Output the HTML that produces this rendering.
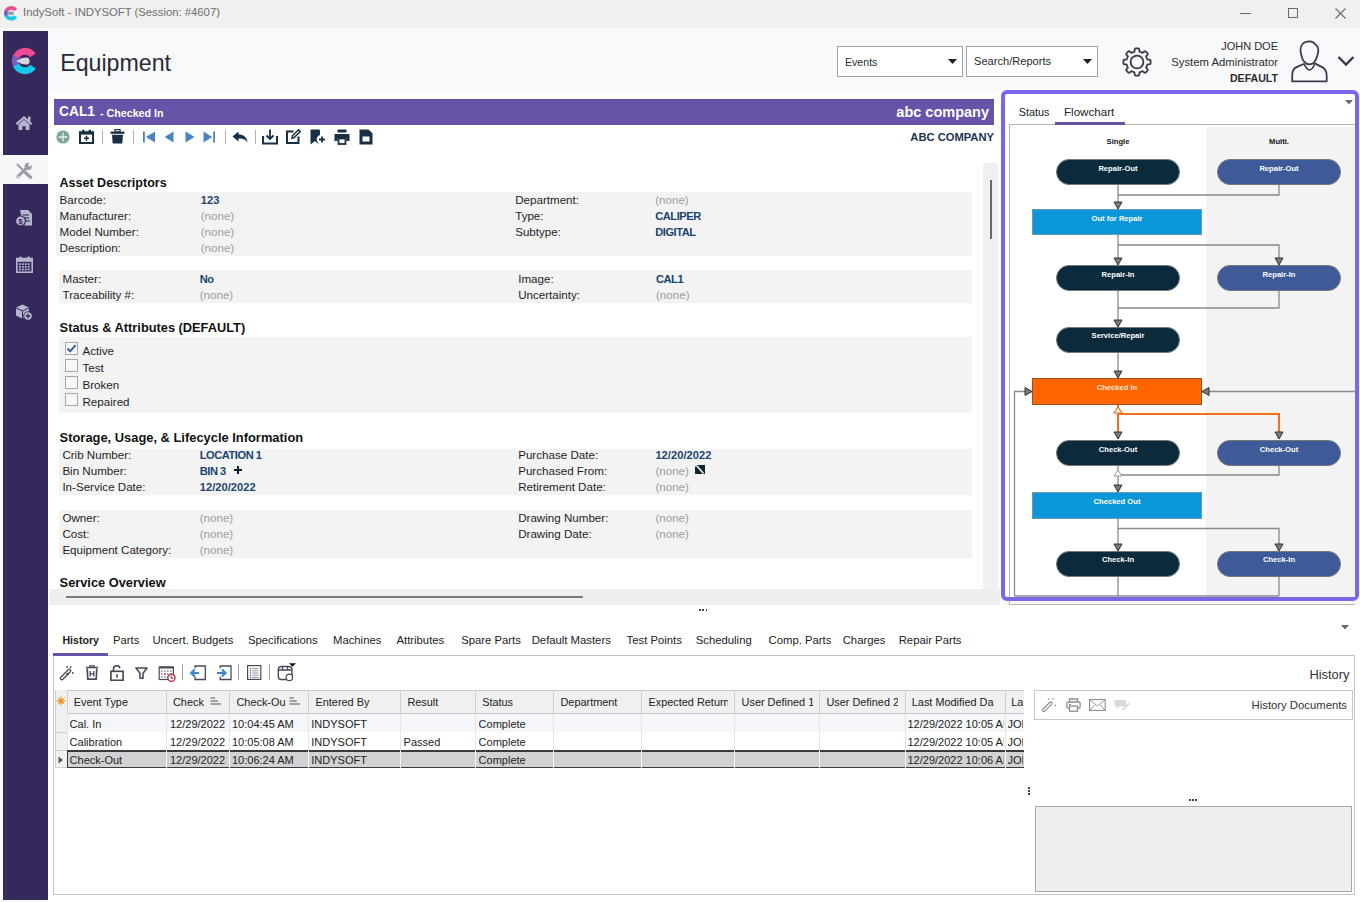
<!DOCTYPE html>
<html><head><meta charset="utf-8">
<style>
*{box-sizing:border-box;margin:0;padding:0}
html,body{width:1360px;height:902px;overflow:hidden;background:#f8f9fb;font-family:"Liberation Sans",sans-serif;color:#1e1e1e;position:relative}
.a{position:absolute;display:block}
.t{position:absolute;white-space:nowrap;line-height:1}
</style></head><body>
<div class="a" style="left:0px;top:0px;width:1360px;height:28px;background:#f0f0f0;"></div>
<svg class="a" style="left:2.5px;top:4.8px;" width="16.5" height="16.5" viewBox="0 0 32 32"><path d="M3.88 23.00 A14 14 0 0 1 3.88 9.00 L10.11 12.60 A6.8 6.8 0 0 0 10.11 19.40Z" fill="#7a5cc0"/><path d="M3.31 10.08 A14 14 0 0 1 27.47 7.97 L21.57 12.10 A6.8 6.8 0 0 0 9.84 13.13Z" fill="#ec4a92"/><path d="M27.47 24.03 A14 14 0 0 1 3.31 21.92 L9.84 18.87 A6.8 6.8 0 0 0 21.57 19.90Z" fill="#16c8ea"/><path d="M6.5 16 Q13 11.5 19.5 12.5 Q22.5 16 19.5 19.5 Q13 20.5 6.5 16Z" fill="#9a9aa6"/></svg>
<div class="t" style="left:23px;top:6.73px;font-size:11.3px;color:#6e6e6e;">IndySoft - INDYSOFT (Session: #4607)</div>
<div class="a" style="left:1240px;top:13px;width:11px;height:1px;background:#6a6a6a;"></div>
<div class="a" style="left:1288px;top:8px;width:10px;height:10px;background:transparent;border:1px solid #6a6a6a;"></div>
<svg class="a" style="left:1335px;top:8px;" width="12" height="11" viewBox="0 0 12 11"><path d="M0.5 0.5 L10.5 10.5 M10.5 0.5 L0.5 10.5" stroke="#6a6a6a" stroke-width="1.1"/></svg>
<div class="a" style="left:0px;top:28px;width:1360px;height:65px;background:#f8f9fb;"></div>
<div class="t" style="left:60.2px;top:51.76px;font-size:23.2px;color:#2a2a36;">Equipment</div>
<div class="a" style="left:837px;top:46px;width:126px;height:31px;background:#fff;border:1px solid #a3a3a3;"></div>
<div class="t" style="left:845px;top:56.53px;font-size:10.6px;color:#2a2a2a;">Events</div>
<svg class="a" style="left:948px;top:59px;" width="9" height="5" viewBox="0 0 9 5"><path d="M0 0 H9 L4.5 5Z" fill="#222"/></svg>
<div class="a" style="left:966px;top:46px;width:132px;height:31px;background:#fff;border:1px solid #a3a3a3;"></div>
<div class="t" style="left:974px;top:56.10px;font-size:11.1px;color:#2a2a2a;">Search/Reports</div>
<svg class="a" style="left:1083px;top:59px;" width="9" height="5" viewBox="0 0 9 5"><path d="M0 0 H9 L4.5 5Z" fill="#222"/></svg>
<svg class="a" style="left:1121px;top:45.7px;" width="32" height="32" viewBox="0 0 32 32"><path d="M29.60 16.00 L29.60 16.18 L29.60 16.36 L29.59 16.53 L29.58 16.71 L29.57 16.89 L29.56 17.07 L29.54 17.24 L29.53 17.42 L29.51 17.60 L29.48 17.78 L29.38 17.94 L29.12 18.08 L28.74 18.19 L28.26 18.27 L27.75 18.34 L27.25 18.39 L26.81 18.45 L26.48 18.52 L26.29 18.61 L26.24 18.74 L26.20 18.88 L26.16 19.01 L26.12 19.14 L26.08 19.28 L26.04 19.41 L25.99 19.54 L25.94 19.67 L25.90 19.80 L25.85 19.93 L25.79 20.06 L25.74 20.18 L25.68 20.31 L25.63 20.44 L25.57 20.56 L25.51 20.69 L25.44 20.81 L25.38 20.94 L25.32 21.06 L25.25 21.18 L25.18 21.30 L25.13 21.43 L25.19 21.63 L25.38 21.92 L25.65 22.26 L25.96 22.66 L26.28 23.06 L26.55 23.46 L26.75 23.81 L26.83 24.09 L26.79 24.28 L26.68 24.42 L26.57 24.56 L26.46 24.70 L26.34 24.83 L26.23 24.97 L26.11 25.10 L25.99 25.23 L25.87 25.36 L25.74 25.49 L25.62 25.62 L25.49 25.74 L25.36 25.87 L25.23 25.99 L25.10 26.11 L24.97 26.23 L24.83 26.34 L24.70 26.46 L24.56 26.57 L24.42 26.68 L24.28 26.79 L24.09 26.83 L23.81 26.75 L23.46 26.55 L23.06 26.28 L22.66 25.96 L22.26 25.65 L21.92 25.38 L21.63 25.19 L21.43 25.13 L21.30 25.18 L21.18 25.25 L21.06 25.32 L20.94 25.38 L20.81 25.44 L20.69 25.51 L20.56 25.57 L20.44 25.63 L20.31 25.68 L20.18 25.74 L20.06 25.79 L19.93 25.85 L19.80 25.90 L19.67 25.94 L19.54 25.99 L19.41 26.04 L19.28 26.08 L19.14 26.12 L19.01 26.16 L18.88 26.20 L18.74 26.24 L18.61 26.29 L18.52 26.48 L18.45 26.81 L18.39 27.25 L18.34 27.75 L18.27 28.26 L18.19 28.74 L18.08 29.12 L17.94 29.38 L17.78 29.48 L17.60 29.51 L17.42 29.53 L17.24 29.54 L17.07 29.56 L16.89 29.57 L16.71 29.58 L16.53 29.59 L16.36 29.60 L16.18 29.60 L16.00 29.60 L15.82 29.60 L15.64 29.60 L15.47 29.59 L15.29 29.58 L15.11 29.57 L14.93 29.56 L14.76 29.54 L14.58 29.53 L14.40 29.51 L14.22 29.48 L14.06 29.38 L13.92 29.12 L13.81 28.74 L13.73 28.26 L13.66 27.75 L13.61 27.25 L13.55 26.81 L13.48 26.48 L13.39 26.29 L13.26 26.24 L13.12 26.20 L12.99 26.16 L12.86 26.12 L12.72 26.08 L12.59 26.04 L12.46 25.99 L12.33 25.94 L12.20 25.90 L12.07 25.85 L11.94 25.79 L11.82 25.74 L11.69 25.68 L11.56 25.63 L11.44 25.57 L11.31 25.51 L11.19 25.44 L11.06 25.38 L10.94 25.32 L10.82 25.25 L10.70 25.18 L10.57 25.13 L10.37 25.19 L10.08 25.38 L9.74 25.65 L9.34 25.96 L8.94 26.28 L8.54 26.55 L8.19 26.75 L7.91 26.83 L7.72 26.79 L7.58 26.68 L7.44 26.57 L7.30 26.46 L7.17 26.34 L7.03 26.23 L6.90 26.11 L6.77 25.99 L6.64 25.87 L6.51 25.74 L6.38 25.62 L6.26 25.49 L6.13 25.36 L6.01 25.23 L5.89 25.10 L5.77 24.97 L5.66 24.83 L5.54 24.70 L5.43 24.56 L5.32 24.42 L5.21 24.28 L5.17 24.09 L5.25 23.81 L5.45 23.46 L5.72 23.06 L6.04 22.66 L6.35 22.26 L6.62 21.92 L6.81 21.63 L6.87 21.43 L6.82 21.30 L6.75 21.18 L6.68 21.06 L6.62 20.94 L6.56 20.81 L6.49 20.69 L6.43 20.56 L6.37 20.44 L6.32 20.31 L6.26 20.18 L6.21 20.06 L6.15 19.93 L6.10 19.80 L6.06 19.67 L6.01 19.54 L5.96 19.41 L5.92 19.28 L5.88 19.14 L5.84 19.01 L5.80 18.88 L5.76 18.74 L5.71 18.61 L5.52 18.52 L5.19 18.45 L4.75 18.39 L4.25 18.34 L3.74 18.27 L3.26 18.19 L2.88 18.08 L2.62 17.94 L2.52 17.78 L2.49 17.60 L2.47 17.42 L2.46 17.24 L2.44 17.07 L2.43 16.89 L2.42 16.71 L2.41 16.53 L2.40 16.36 L2.40 16.18 L2.40 16.00 L2.40 15.82 L2.40 15.64 L2.41 15.47 L2.42 15.29 L2.43 15.11 L2.44 14.93 L2.46 14.76 L2.47 14.58 L2.49 14.40 L2.52 14.22 L2.62 14.06 L2.88 13.92 L3.26 13.81 L3.74 13.73 L4.25 13.66 L4.75 13.61 L5.19 13.55 L5.52 13.48 L5.71 13.39 L5.76 13.26 L5.80 13.12 L5.84 12.99 L5.88 12.86 L5.92 12.72 L5.96 12.59 L6.01 12.46 L6.06 12.33 L6.10 12.20 L6.15 12.07 L6.21 11.94 L6.26 11.82 L6.32 11.69 L6.37 11.56 L6.43 11.44 L6.49 11.31 L6.56 11.19 L6.62 11.06 L6.68 10.94 L6.75 10.82 L6.82 10.70 L6.87 10.57 L6.81 10.37 L6.62 10.08 L6.35 9.74 L6.04 9.34 L5.72 8.94 L5.45 8.54 L5.25 8.19 L5.17 7.91 L5.21 7.72 L5.32 7.58 L5.43 7.44 L5.54 7.30 L5.66 7.17 L5.77 7.03 L5.89 6.90 L6.01 6.77 L6.13 6.64 L6.26 6.51 L6.38 6.38 L6.51 6.26 L6.64 6.13 L6.77 6.01 L6.90 5.89 L7.03 5.77 L7.17 5.66 L7.30 5.54 L7.44 5.43 L7.58 5.32 L7.72 5.21 L7.91 5.17 L8.19 5.25 L8.54 5.45 L8.94 5.72 L9.34 6.04 L9.74 6.35 L10.08 6.62 L10.37 6.81 L10.57 6.87 L10.70 6.82 L10.82 6.75 L10.94 6.68 L11.06 6.62 L11.19 6.56 L11.31 6.49 L11.44 6.43 L11.56 6.37 L11.69 6.32 L11.82 6.26 L11.94 6.21 L12.07 6.15 L12.20 6.10 L12.33 6.06 L12.46 6.01 L12.59 5.96 L12.72 5.92 L12.86 5.88 L12.99 5.84 L13.12 5.80 L13.26 5.76 L13.39 5.71 L13.48 5.52 L13.55 5.19 L13.61 4.75 L13.66 4.25 L13.73 3.74 L13.81 3.26 L13.92 2.88 L14.06 2.62 L14.22 2.52 L14.40 2.49 L14.58 2.47 L14.76 2.46 L14.93 2.44 L15.11 2.43 L15.29 2.42 L15.47 2.41 L15.64 2.40 L15.82 2.40 L16.00 2.40 L16.18 2.40 L16.36 2.40 L16.53 2.41 L16.71 2.42 L16.89 2.43 L17.07 2.44 L17.24 2.46 L17.42 2.47 L17.60 2.49 L17.78 2.52 L17.94 2.62 L18.08 2.88 L18.19 3.26 L18.27 3.74 L18.34 4.25 L18.39 4.75 L18.45 5.19 L18.52 5.52 L18.61 5.71 L18.74 5.76 L18.88 5.80 L19.01 5.84 L19.14 5.88 L19.28 5.92 L19.41 5.96 L19.54 6.01 L19.67 6.06 L19.80 6.10 L19.93 6.15 L20.06 6.21 L20.18 6.26 L20.31 6.32 L20.44 6.37 L20.56 6.43 L20.69 6.49 L20.81 6.56 L20.94 6.62 L21.06 6.68 L21.18 6.75 L21.30 6.82 L21.43 6.87 L21.63 6.81 L21.92 6.62 L22.26 6.35 L22.66 6.04 L23.06 5.72 L23.46 5.45 L23.81 5.25 L24.09 5.17 L24.28 5.21 L24.42 5.32 L24.56 5.43 L24.70 5.54 L24.83 5.66 L24.97 5.77 L25.10 5.89 L25.23 6.01 L25.36 6.13 L25.49 6.26 L25.62 6.38 L25.74 6.51 L25.87 6.64 L25.99 6.77 L26.11 6.90 L26.23 7.03 L26.34 7.17 L26.46 7.30 L26.57 7.44 L26.68 7.58 L26.79 7.72 L26.83 7.91 L26.75 8.19 L26.55 8.54 L26.28 8.94 L25.96 9.34 L25.65 9.74 L25.38 10.08 L25.19 10.37 L25.13 10.57 L25.18 10.70 L25.25 10.82 L25.32 10.94 L25.38 11.06 L25.44 11.19 L25.51 11.31 L25.57 11.44 L25.63 11.56 L25.68 11.69 L25.74 11.82 L25.79 11.94 L25.85 12.07 L25.90 12.20 L25.94 12.33 L25.99 12.46 L26.04 12.59 L26.08 12.72 L26.12 12.86 L26.16 12.99 L26.20 13.12 L26.24 13.26 L26.29 13.39 L26.48 13.48 L26.81 13.55 L27.25 13.61 L27.75 13.66 L28.26 13.73 L28.74 13.81 L29.12 13.92 L29.38 14.06 L29.48 14.22 L29.51 14.40 L29.53 14.58 L29.54 14.76 L29.56 14.93 L29.57 15.11 L29.58 15.29 L29.59 15.47 L29.60 15.64 L29.60 15.82Z" fill="none" stroke="#3a3a46" stroke-width="1.8" stroke-linejoin="round"/><circle cx="16" cy="16" r="6.4" fill="none" stroke="#3a3a46" stroke-width="1.8"/></svg>
<div class="t" style="right:82px;top:41.19px;font-size:11px;color:#2c2c2c;">JOHN DOE</div>
<div class="t" style="right:82px;top:56.73px;font-size:11.3px;color:#2c2c2c;">System Administrator</div>
<div class="t" style="right:82px;top:73.03px;font-size:10.6px;color:#2c2c2c;font-weight:700;">DEFAULT</div>
<svg class="a" style="left:1285px;top:36px;" width="50" height="50" viewBox="0 0 50 50"><path d="M24.5 5.3 C18.5 5.3 15.5 9 15.5 14 C15.5 17 16.3 18.5 16.5 20 C17.5 24.5 20.5 28.3 24.4 28.3 C28.5 28.3 31 24.5 32 20.5 C33 18.5 33.5 16.5 33.3 13.5 C33 11 32 9.5 30.5 8.5 C29 6.2 27 5.3 24.5 5.3Z" fill="none" stroke="#3b3a4a" stroke-width="1.8"/>
<path d="M19 27.7 C20.5 31 22.5 34 24.4 34 C26.5 34 28.5 31 30 27.2" fill="none" stroke="#3b3a4a" stroke-width="1.6"/>
<path d="M19 27.7 C16 29.5 12 30.5 10 32 C7.5 34 7.2 36.5 7.2 40 V45.3 H41.7 V40 C41.7 36.5 41 34 38.5 32 C36.5 30.5 33 29.5 30 27.2" fill="none" stroke="#3b3a4a" stroke-width="1.8" stroke-linejoin="round"/></svg>
<svg class="a" style="left:1337px;top:55px;" width="18" height="12" viewBox="0 0 18 12"><path d="M1.5 2 L9 9.5 L16.5 2" fill="none" stroke="#3b3b48" stroke-width="2.4"/></svg>
<div class="a" style="left:3px;top:31px;width:45px;height:869px;background:#35295b;"></div>
<div class="a" style="left:3px;top:155px;width:45px;height:29px;background:#f7f8fa;"></div>
<svg class="a" style="left:10px;top:45.5px;" width="30" height="30" viewBox="0 0 32 32"><path d="M3.88 23.00 A14 14 0 0 1 3.88 9.00 L10.11 12.60 A6.8 6.8 0 0 0 10.11 19.40Z" fill="#7a5cc0"/><path d="M3.31 10.08 A14 14 0 0 1 27.47 7.97 L21.57 12.10 A6.8 6.8 0 0 0 9.84 13.13Z" fill="#ec4a92"/><path d="M27.47 24.03 A14 14 0 0 1 3.31 21.92 L9.84 18.87 A6.8 6.8 0 0 0 21.57 19.90Z" fill="#16c8ea"/><path d="M6.5 16 Q13 11.5 19.5 12.5 Q22.5 16 19.5 19.5 Q13 20.5 6.5 16Z" fill="#d8d4dc"/></svg>
<svg class="a" style="left:15px;top:115px;" width="18" height="16" viewBox="0 0 18 16"><path d="M9 1 L17.5 8.5 L15.8 10 L9 4 L2.2 10 L0.5 8.5Z" fill="#b9b3cf"/><path d="M3.5 9.5 L9 4.8 L14.5 9.5 V15 H10.6 V11.2 H7.4 V15 H3.5Z" fill="#b9b3cf"/><rect x="13" y="1.5" width="2.5" height="4.5" fill="#b9b3cf"/></svg>
<svg class="a" style="left:15px;top:162px;" width="18" height="18" viewBox="0 0 18 18"><path d="M2.6 2.8 L9 9.2" stroke="#9c9ca8" stroke-width="2.2" stroke-linecap="round"/><path d="M10.2 10.4 L15.6 15.2" stroke="#9c9ca8" stroke-width="3.4" stroke-linecap="round"/><path d="M2.8 14.6 L11.2 6.2" stroke="#9c9ca8" stroke-width="3" stroke-linecap="round"/><circle cx="13.2" cy="4.4" r="3.6" fill="#9c9ca8"/><path d="M13.8 3.8 L17.8 -0.2" stroke="#f7f8fa" stroke-width="2.6"/><circle cx="2.9" cy="14.5" r="0.8" fill="#f7f8fa"/></svg>
<svg class="a" style="left:15px;top:209px;" width="18" height="18" viewBox="0 0 18 18"><path d="M5 1 H13 L17 5 V16.5 H8" fill="#b9b3cf"/><path d="M7.5 6 H14 M9 9 H14 M10 12 H15" stroke="#35295b" stroke-width="1.1"/><circle cx="5.5" cy="12" r="5" fill="#b9b3cf" stroke="#35295b" stroke-width="1.2"/><text x="5.5" y="15" font-size="8" font-weight="700" text-anchor="middle" fill="#35295b" font-family="Liberation Sans">$</text></svg>
<svg class="a" style="left:16px;top:256px;" width="17" height="17" viewBox="0 0 17 17"><rect x="0.8" y="2.5" width="15.4" height="13.7" fill="none" stroke="#b9b3cf" stroke-width="1.6"/><rect x="0.8" y="2.5" width="15.4" height="3.3" fill="#b9b3cf"/><rect x="3.5" y="0.5" width="2" height="3" fill="#b9b3cf"/><rect x="11.5" y="0.5" width="2" height="3" fill="#b9b3cf"/><rect x="3.0" y="7.2" width="1.9" height="1.8" fill="#b9b3cf"/><rect x="5.9" y="7.2" width="1.9" height="1.8" fill="#b9b3cf"/><rect x="8.8" y="7.2" width="1.9" height="1.8" fill="#b9b3cf"/><rect x="11.7" y="7.2" width="1.9" height="1.8" fill="#b9b3cf"/><rect x="3.0" y="9.9" width="1.9" height="1.8" fill="#b9b3cf"/><rect x="5.9" y="9.9" width="1.9" height="1.8" fill="#b9b3cf"/><rect x="8.8" y="9.9" width="1.9" height="1.8" fill="#b9b3cf"/><rect x="11.7" y="9.9" width="1.9" height="1.8" fill="#b9b3cf"/><rect x="3.0" y="12.6" width="1.9" height="1.8" fill="#b9b3cf"/><rect x="5.9" y="12.6" width="1.9" height="1.8" fill="#b9b3cf"/><rect x="8.8" y="12.6" width="1.9" height="1.8" fill="#b9b3cf"/><rect x="11.7" y="12.6" width="1.9" height="1.8" fill="#b9b3cf"/></svg>
<svg class="a" style="left:15px;top:303px;" width="18" height="18" viewBox="0 0 18 18"><path d="M1 4.5 L7.5 1.5 L14 4.5 L7.5 7.5Z" fill="#b9b3cf"/><path d="M1 5.5 L7 8.3 V15.5 L1 12.5Z" fill="#b9b3cf"/><path d="M8 8.3 L14 5.5 V9 A5 5 0 0 0 9 15 L8 15.5Z" fill="#b9b3cf"/><circle cx="13" cy="13" r="4.3" fill="#b9b3cf" stroke="#35295b" stroke-width="0.9"/><path d="M13 10.8 V15.2 M10.8 13 H15.2" stroke="#35295b" stroke-width="1.3"/></svg>
<div class="a" style="left:48px;top:93px;width:953px;height:512px;background:#fff;"></div>
<div class="a" style="left:54px;top:99px;width:940px;height:26px;background:#6753a7;"></div>
<div class="a" style="left:54px;top:99px;width:940px;height:1px;background:#5f4c93;"></div>
<div class="t" style="left:59px;top:105.32px;font-size:13.8px;color:#fff;font-weight:700;">CAL1</div>
<div class="t" style="left:100px;top:107.94px;font-size:10.7px;color:#fff;font-weight:700;">- Checked In</div>
<div class="t" style="right:371px;top:104.73px;font-size:14.5px;color:#fff;font-weight:700;">abc company</div>
<div class="t" style="right:366px;top:131.52px;font-size:11.2px;color:#1a3550;font-weight:700;">ABC COMPANY</div>
<svg class="a" style="left:56px;top:130px;" width="14" height="14" viewBox="0 0 14 14"><circle cx="7" cy="7" r="6.6" fill="#7fa598"/><path d="M7 2.6 V11.4 M2.6 7 H11.4" stroke="#e8f0ec" stroke-width="1.3"/></svg>
<svg class="a" style="left:79px;top:129px;" width="15" height="15" viewBox="0 0 15 15"><rect x="1" y="3.2" width="13" height="10.8" fill="none" stroke="#173043" stroke-width="2"/><rect x="1" y="3" width="13" height="2.6" fill="#173043"/><rect x="3" y="0.8" width="2.4" height="3" fill="#173043"/><rect x="9.6" y="0.8" width="2.4" height="3" fill="#173043"/><path d="M7.5 6.8 V11.8 M5 9.3 H10" stroke="#173043" stroke-width="1.6"/></svg>
<div class="a" style="left:102px;top:130px;width:1.2999999999999972px;height:14px;background:#b0b0b0;"></div>
<svg class="a" style="left:110px;top:129px;" width="15" height="15" viewBox="0 0 15 15"><rect x="0.5" y="2.6" width="14" height="2.2" fill="#173043"/><rect x="5" y="0.5" width="5" height="2.5" fill="none" stroke="#173043" stroke-width="1.3"/><path d="M2 5.8 H13 L12.3 14.5 H2.7Z" fill="#173043"/></svg>
<div class="a" style="left:133px;top:130px;width:1.3000000000000114px;height:14px;background:#b0b0b0;"></div>
<svg class="a" style="left:143px;top:131px;" width="13" height="12" viewBox="0 0 13 12"><rect x="0" y="0.5" width="1.8" height="11" fill="#4a84c4"/><path d="M12 0.5 V11.5 L2.8 6Z" fill="#4a84c4"/></svg>
<svg class="a" style="left:164px;top:131px;" width="10" height="12" viewBox="0 0 10 12"><path d="M9.5 0.5 V11.5 L0.5 6Z" fill="#4a84c4"/></svg>
<svg class="a" style="left:185px;top:131px;" width="10" height="12" viewBox="0 0 10 12"><path d="M0.5 0.5 V11.5 L9.5 6Z" fill="#4a84c4"/></svg>
<svg class="a" style="left:203px;top:131px;" width="13" height="12" viewBox="0 0 13 12"><path d="M0.5 0.5 V11.5 L9.2 6Z" fill="#4a84c4"/><rect x="10.2" y="0.5" width="1.8" height="11" fill="#4a84c4"/></svg>
<div class="a" style="left:225px;top:130px;width:1.3000000000000114px;height:14px;background:#b0b0b0;"></div>
<svg class="a" style="left:232px;top:131px;" width="16" height="12" viewBox="0 0 16 12"><path d="M6.5 0.5 L0.5 5.5 L6.5 10.5 V7.5 C10.5 7 13.5 8.5 15.5 11.5 C15 6.5 11.5 3.5 6.5 3.3Z" fill="#173043"/></svg>
<div class="a" style="left:255px;top:130px;width:1.3000000000000114px;height:14px;background:#b0b0b0;"></div>
<svg class="a" style="left:262px;top:129px;" width="16" height="16" viewBox="0 0 16 16"><path d="M1 7 V14.5 H15 V7" fill="none" stroke="#173043" stroke-width="2"/><path d="M8 0.5 V9.5 M4.5 6.5 L8 10 L11.5 6.5" fill="none" stroke="#173043" stroke-width="1.8"/></svg>
<svg class="a" style="left:286px;top:129px;" width="15" height="15" viewBox="0 0 15 15"><path d="M7.5 2.5 H1 V14 H12.5 V7.5" fill="none" stroke="#173043" stroke-width="2"/><path d="M6 9.2 L6.5 6.8 L12.5 0.8 L14.2 2.5 L8.2 8.5Z" fill="none" stroke="#173043" stroke-width="1.5"/></svg>
<svg class="a" style="left:310px;top:129px;" width="16" height="16" viewBox="0 0 16 16"><path d="M0.5 0.5 H9 C9.5 0.5 10 1 10 1.5 V6 A4.5 4.5 0 0 0 8 13.5 L9 15.5 L5 12 L0.5 15.5Z" fill="#173043"/><path d="M12 7.5 V13.5 M9 10.5 H15" stroke="#173043" stroke-width="1.8"/></svg>
<svg class="a" style="left:334px;top:129px;" width="16" height="16" viewBox="0 0 16 16"><rect x="3.5" y="0.5" width="9" height="3" fill="#173043"/><path d="M0.5 5 H15.5 V12 H12.5 V9.5 H3.5 V12 H0.5Z" fill="#173043"/><rect x="4.5" y="9.5" width="7" height="5.5" fill="none" stroke="#173043" stroke-width="1.8"/></svg>
<svg class="a" style="left:359px;top:129px;" width="14" height="16" viewBox="0 0 14 16"><path d="M0.5 0.5 H9.5 L13.5 4.5 V15.5 H0.5Z" fill="#173043"/><rect x="3.5" y="7.5" width="7" height="5" fill="#fff"/></svg>
<div class="a" style="left:983px;top:163px;width:15px;height:426px;background:#f0f0f0;"></div>
<div class="a" style="left:990px;top:180px;width:2px;height:59px;background:#6a6a6a;"></div>
<div class="t" style="left:59.6px;top:177.22px;font-size:12.5px;color:#111;font-weight:700;">Asset Descriptors</div>
<div class="a" style="left:56px;top:192px;width:916px;height:64px;background:#f3f3f3;"></div>
<div class="t" style="left:59.6px;top:194.18px;font-size:11.6px;color:#1e1e1e;">Barcode:</div>
<div class="t" style="left:200.7px;top:194.60px;font-size:11.1px;color:#1b4470;font-weight:700;letter-spacing:0.05px;">123</div>
<div class="t" style="left:59.6px;top:210.18px;font-size:11.6px;color:#1e1e1e;">Manufacturer:</div>
<div class="t" style="left:200.7px;top:210.18px;font-size:11.6px;color:#9c9c9c;">(none)</div>
<div class="t" style="left:59.6px;top:226.18px;font-size:11.6px;color:#1e1e1e;">Model Number:</div>
<div class="t" style="left:200.7px;top:226.18px;font-size:11.6px;color:#9c9c9c;">(none)</div>
<div class="t" style="left:59.6px;top:242.18px;font-size:11.6px;color:#1e1e1e;">Description:</div>
<div class="t" style="left:200.7px;top:242.18px;font-size:11.6px;color:#9c9c9c;">(none)</div>
<div class="t" style="left:515.2px;top:194.18px;font-size:11.6px;color:#1e1e1e;">Department:</div>
<div class="t" style="left:655.2px;top:194.18px;font-size:11.6px;color:#9c9c9c;">(none)</div>
<div class="t" style="left:515.2px;top:210.18px;font-size:11.6px;color:#1e1e1e;">Type:</div>
<div class="t" style="left:655.2px;top:210.60px;font-size:11.1px;color:#1b4470;font-weight:700;letter-spacing:-0.45px;">CALIPER</div>
<div class="t" style="left:515.2px;top:226.18px;font-size:11.6px;color:#1e1e1e;">Subtype:</div>
<div class="t" style="left:655.2px;top:226.60px;font-size:11.1px;color:#1b4470;font-weight:700;letter-spacing:-0.45px;">DIGITAL</div>
<div class="a" style="left:59px;top:270px;width:913px;height:33px;background:#f3f3f3;"></div>
<div class="t" style="left:62.5px;top:273.18px;font-size:11.6px;color:#1e1e1e;">Master:</div>
<div class="t" style="left:199.7px;top:273.60px;font-size:11.1px;color:#1b4470;font-weight:700;letter-spacing:-0.45px;">No</div>
<div class="t" style="left:62.5px;top:289.18px;font-size:11.6px;color:#1e1e1e;">Traceability #:</div>
<div class="t" style="left:199.7px;top:289.18px;font-size:11.6px;color:#9c9c9c;">(none)</div>
<div class="t" style="left:518.2px;top:273.18px;font-size:11.6px;color:#1e1e1e;">Image:</div>
<div class="t" style="left:656px;top:273.60px;font-size:11.1px;color:#1b4470;font-weight:700;letter-spacing:-0.45px;">CAL1</div>
<div class="t" style="left:518.2px;top:289.18px;font-size:11.6px;color:#1e1e1e;">Uncertainty:</div>
<div class="t" style="left:656px;top:289.18px;font-size:11.6px;color:#9c9c9c;">(none)</div>
<div class="t" style="left:59.6px;top:321.76px;font-size:12.8px;color:#111;font-weight:700;">Status &amp; Attributes (DEFAULT)</div>
<div class="a" style="left:59px;top:337px;width:913px;height:76px;background:#f3f3f3;"></div>
<div class="a" style="left:65px;top:342px;width:13px;height:13px;background:#f7f7f7;border:1px solid #a8a8a8;"></div>
<div class="t" style="left:82.5px;top:344.68px;font-size:11.6px;color:#1e1e1e;">Active</div>
<div class="a" style="left:65px;top:359px;width:13px;height:13px;background:#f7f7f7;border:1px solid #a8a8a8;"></div>
<div class="t" style="left:82.5px;top:361.68px;font-size:11.6px;color:#1e1e1e;">Test</div>
<div class="a" style="left:65px;top:376px;width:13px;height:13px;background:#f7f7f7;border:1px solid #a8a8a8;"></div>
<div class="t" style="left:82.5px;top:378.68px;font-size:11.6px;color:#1e1e1e;">Broken</div>
<div class="a" style="left:65px;top:393px;width:13px;height:13px;background:#f7f7f7;border:1px solid #a8a8a8;"></div>
<div class="t" style="left:82.5px;top:395.68px;font-size:11.6px;color:#1e1e1e;">Repaired</div>
<svg class="a" style="left:66px;top:343px;" width="11" height="11" viewBox="0 0 11 11"><path d="M1.5 5.5 L4.2 8.3 L9.6 2.2" fill="none" stroke="#3e5f9c" stroke-width="2"/></svg>
<div class="t" style="left:59.6px;top:431.68px;font-size:12.9px;color:#111;font-weight:700;">Storage, Usage, &amp; Lifecycle Information</div>
<div class="a" style="left:59px;top:449px;width:913px;height:46px;background:#f3f3f3;"></div>
<div class="t" style="left:62.4px;top:449.18px;font-size:11.6px;color:#1e1e1e;">Crib Number:</div>
<div class="t" style="left:199.7px;top:449.60px;font-size:11.1px;color:#1b4470;font-weight:700;letter-spacing:-0.45px;">LOCATION 1</div>
<div class="t" style="left:62.4px;top:465.18px;font-size:11.6px;color:#1e1e1e;">Bin Number:</div>
<div class="t" style="left:199.7px;top:465.60px;font-size:11.1px;color:#1b4470;font-weight:700;letter-spacing:-0.45px;">BIN 3</div>
<div class="t" style="left:62.4px;top:481.18px;font-size:11.6px;color:#1e1e1e;">In-Service Date:</div>
<div class="t" style="left:199.7px;top:481.60px;font-size:11.1px;color:#1b4470;font-weight:700;letter-spacing:0.05px;">12/20/2022</div>
<svg class="a" style="left:234px;top:466px;" width="8" height="8" viewBox="0 0 8 8"><path d="M4 0 V8 M0 4 H8" stroke="#0e1e2a" stroke-width="2"/></svg>
<div class="t" style="left:518.2px;top:449.18px;font-size:11.6px;color:#1e1e1e;">Purchase Date:</div>
<div class="t" style="left:655.4px;top:449.60px;font-size:11.1px;color:#1b4470;font-weight:700;letter-spacing:0.05px;">12/20/2022</div>
<div class="t" style="left:518.2px;top:465.18px;font-size:11.6px;color:#1e1e1e;">Purchased From:</div>
<div class="t" style="left:655.4px;top:465.18px;font-size:11.6px;color:#9c9c9c;">(none)</div>
<div class="t" style="left:518.2px;top:481.18px;font-size:11.6px;color:#1e1e1e;">Retirement Date:</div>
<div class="t" style="left:655.4px;top:481.18px;font-size:11.6px;color:#9c9c9c;">(none)</div>
<svg class="a" style="left:695px;top:465px;" width="10" height="9" viewBox="0 0 10 9"><path d="M0 2 L2 0 H10 V9 H0Z" fill="#14262e"/><path d="M1.5 0.5 L8.5 8.5" stroke="#f3f3f3" stroke-width="1.6"/></svg>
<div class="a" style="left:59px;top:510px;width:913px;height:48px;background:#f3f3f3;"></div>
<div class="t" style="left:62.4px;top:512.18px;font-size:11.6px;color:#1e1e1e;">Owner:</div>
<div class="t" style="left:199.7px;top:512.18px;font-size:11.6px;color:#9c9c9c;">(none)</div>
<div class="t" style="left:62.4px;top:528.18px;font-size:11.6px;color:#1e1e1e;">Cost:</div>
<div class="t" style="left:199.7px;top:528.18px;font-size:11.6px;color:#9c9c9c;">(none)</div>
<div class="t" style="left:62.4px;top:544.18px;font-size:11.6px;color:#1e1e1e;">Equipment Category:</div>
<div class="t" style="left:199.7px;top:544.18px;font-size:11.6px;color:#9c9c9c;">(none)</div>
<div class="t" style="left:518.2px;top:512.18px;font-size:11.6px;color:#1e1e1e;">Drawing Number:</div>
<div class="t" style="left:655.4px;top:512.18px;font-size:11.6px;color:#9c9c9c;">(none)</div>
<div class="t" style="left:518.2px;top:528.18px;font-size:11.6px;color:#1e1e1e;">Drawing Date:</div>
<div class="t" style="left:655.4px;top:528.18px;font-size:11.6px;color:#9c9c9c;">(none)</div>
<div class="t" style="left:59.6px;top:576.76px;font-size:12.8px;color:#111;font-weight:700;">Service Overview</div>
<div class="a" style="left:49px;top:589px;width:951px;height:16px;background:#efefef;"></div>
<div class="a" style="left:66px;top:596px;width:517px;height:2px;background:#7a7a7a;"></div>
<div class="a" style="left:1001px;top:90px;width:358px;height:511px;background:#fff;border:4px solid #7b66ea;border-radius:6px;"></div>
<div class="t" style="left:1018.7px;top:106.86px;font-size:10.8px;color:#222;">Status</div>
<div class="t" style="left:1064px;top:106.18px;font-size:11.6px;color:#222;">Flowchart</div>
<div class="a" style="left:1009px;top:124px;width:346px;height:1px;background:#b4b4b4;"></div>
<div class="a" style="left:1055px;top:122px;width:70px;height:3px;background:#6852a3;"></div>
<svg class="a" style="left:1345px;top:100px;" width="8" height="5" viewBox="0 0 8 5"><path d="M0 0 H8 L4 4.5Z" fill="#6a6a6a"/></svg>
<div class="a" style="left:1009px;top:125px;width:1px;height:472px;background:#b4b4b4;"></div>
<div class="a" style="left:1009px;top:601px;width:1px;height:4px;background:#b8b8b8;"></div>
<div class="a" style="left:1206px;top:127px;width:149px;height:470px;background:#f3f3f3;"></div>
<svg class="a" style="left:1005px;top:125px;" width="350" height="472" viewBox="0 0 350 472"><polyline points="113.0,60.0 113.0,83.0" fill="none" stroke="#8a8a8a" stroke-width="1.3"/><polyline points="274.0,60.0 274.0,70.0 113.0,70.0" fill="none" stroke="#8a8a8a" stroke-width="1.3"/><path d="M109.0 77.0 H117.0 L113.0 84.0Z" fill="#7a7a7a" stroke="#333" stroke-width="1"/><polyline points="113.0,110.0 113.0,140.0" fill="none" stroke="#8a8a8a" stroke-width="1.3"/><polyline points="113.0,120.0 274.0,120.0 274.0,140.0" fill="none" stroke="#8a8a8a" stroke-width="1.3"/><path d="M109.0 133.0 H117.0 L113.0 140.0Z" fill="#7a7a7a" stroke="#333" stroke-width="1"/><path d="M270.0 133.0 H278.0 L274.0 140.0Z" fill="#7a7a7a" stroke="#333" stroke-width="1"/><polyline points="113.0,166.0 113.0,202.0" fill="none" stroke="#8a8a8a" stroke-width="1.3"/><polyline points="274.0,166.0 274.0,183.0 113.0,183.0" fill="none" stroke="#8a8a8a" stroke-width="1.3"/><path d="M109.0 195.0 H117.0 L113.0 202.0Z" fill="#7a7a7a" stroke="#333" stroke-width="1"/><polyline points="113.0,227.0 113.0,253.0" fill="none" stroke="#8a8a8a" stroke-width="1.3"/><path d="M109.0 246.0 H117.0 L113.0 253.0Z" fill="#7a7a7a" stroke="#333" stroke-width="1"/><polyline points="9.5,471.0 9.5,266.5 27.0,266.5" fill="none" stroke="#8a8a8a" stroke-width="1.3"/><path d="M20.0 262.5 V270.5 L27.0 266.5Z" fill="#7a7a7a" stroke="#333" stroke-width="1"/><polyline points="350.0,266.5 197.0,266.5" fill="none" stroke="#8a8a8a" stroke-width="1.3"/><path d="M204.0 262.5 V270.5 L197.0 266.5Z" fill="#7a7a7a" stroke="#333" stroke-width="1"/><polyline points="113.0,451.0 113.0,471.0" fill="none" stroke="#8a8a8a" stroke-width="1.3"/><polyline points="274.0,451.0 274.0,471.0" fill="none" stroke="#8a8a8a" stroke-width="1.3"/><polyline points="9.5,471.0 274.0,471.0" fill="none" stroke="#8a8a8a" stroke-width="1.6"/><polyline points="113.0,279.0 113.0,314.0" fill="none" stroke="#f07020" stroke-width="2"/><polyline points="113.0,289.0 274.0,289.0 274.0,314.0" fill="none" stroke="#f07020" stroke-width="2"/><path d="M109 288 L113 282 L117 288Z" fill="#fff" stroke="#f07020" stroke-width="1.2"/><path d="M109.0 307.0 H117.0 L113.0 314.0Z" fill="#7a7a7a" stroke="#333" stroke-width="1"/><path d="M270.0 307.0 H278.0 L274.0 314.0Z" fill="#7a7a7a" stroke="#333" stroke-width="1"/><polyline points="113.0,341.0 113.0,367.0" fill="none" stroke="#8a8a8a" stroke-width="1.3"/><polyline points="274.0,341.0 274.0,350.0 113.0,350.0" fill="none" stroke="#8a8a8a" stroke-width="1.3"/><path d="M109 351 L113 345 L117 351Z" fill="#fff" stroke="#999" stroke-width="1"/><path d="M109.0 360.0 H117.0 L113.0 367.0Z" fill="#7a7a7a" stroke="#333" stroke-width="1"/><polyline points="113.0,394.0 113.0,426.0" fill="none" stroke="#8a8a8a" stroke-width="1.3"/><polyline points="113.0,403.5 274.0,403.5 274.0,426.0" fill="none" stroke="#8a8a8a" stroke-width="1.3"/><path d="M109.0 419.0 H117.0 L113.0 426.0Z" fill="#7a7a7a" stroke="#333" stroke-width="1"/><path d="M270.0 419.0 H278.0 L274.0 426.0Z" fill="#7a7a7a" stroke="#333" stroke-width="1"/></svg>
<div class="t" style="left:818px;width:600px;text-align:center;top:138.07px;font-size:7.6px;color:#111;font-weight:700;">Single</div>
<div class="t" style="left:979px;width:600px;text-align:center;top:138.07px;font-size:7.6px;color:#111;font-weight:700;">Multi.</div>
<div class="a" style="left:1056px;top:159px;width:124px;height:26px;background:#0b2a3c;border-radius:13px;border:1px solid #777;"></div>
<div class="t" style="left:818px;width:600px;text-align:center;top:164.87px;font-size:7.6px;color:#fff;font-weight:700;">Repair-Out</div>
<div class="a" style="left:1217px;top:159px;width:124px;height:26px;background:#3f5a98;border-radius:13px;border:1px solid #777;"></div>
<div class="t" style="left:979px;width:600px;text-align:center;top:164.87px;font-size:7.6px;color:#fff;font-weight:700;">Repair-Out</div>
<div class="a" style="left:1032px;top:208.5px;width:170px;height:26.5px;background:#0a96d9;border:1px solid #6a9ab0;"></div>
<div class="t" style="left:817px;width:600px;text-align:center;top:214.77px;font-size:7.6px;color:#fff;font-weight:700;">Out for Repair</div>
<div class="a" style="left:1056px;top:265px;width:124px;height:26px;background:#0b2a3c;border-radius:13px;border:1px solid #777;"></div>
<div class="t" style="left:818px;width:600px;text-align:center;top:270.97px;font-size:7.6px;color:#fff;font-weight:700;">Repair-In</div>
<div class="a" style="left:1217px;top:265px;width:124px;height:26px;background:#3f5a98;border-radius:13px;border:1px solid #777;"></div>
<div class="t" style="left:979px;width:600px;text-align:center;top:270.97px;font-size:7.6px;color:#fff;font-weight:700;">Repair-In</div>
<div class="a" style="left:1056px;top:327px;width:124px;height:26px;background:#0b2a3c;border-radius:13px;border:1px solid #777;"></div>
<div class="t" style="left:818px;width:600px;text-align:center;top:332.07px;font-size:7.6px;color:#fff;font-weight:700;">Service/Repair</div>
<div class="a" style="left:1032px;top:378px;width:170px;height:26.5px;background:#ff6600;border:1px solid #a05020;"></div>
<div class="t" style="left:817px;width:600px;text-align:center;top:383.77px;font-size:7.6px;color:#ffe8d8;font-weight:700;">Checked In</div>
<div class="a" style="left:1056px;top:440px;width:124px;height:26px;background:#0b2a3c;border-radius:13px;border:1px solid #777;"></div>
<div class="t" style="left:818px;width:600px;text-align:center;top:445.77px;font-size:7.6px;color:#fff;font-weight:700;">Check-Out</div>
<div class="a" style="left:1217px;top:440px;width:124px;height:26px;background:#3f5a98;border-radius:13px;border:1px solid #777;"></div>
<div class="t" style="left:979px;width:600px;text-align:center;top:445.77px;font-size:7.6px;color:#fff;font-weight:700;">Check-Out</div>
<div class="a" style="left:1032px;top:492px;width:170px;height:26.5px;background:#0a96d9;border:1px solid #6a9ab0;"></div>
<div class="t" style="left:817px;width:600px;text-align:center;top:498.17px;font-size:7.6px;color:#fff;font-weight:700;">Checked Out</div>
<div class="a" style="left:1056px;top:551px;width:124px;height:26px;background:#0b2a3c;border-radius:13px;border:1px solid #777;"></div>
<div class="t" style="left:818px;width:600px;text-align:center;top:555.87px;font-size:7.6px;color:#fff;font-weight:700;">Check-In</div>
<div class="a" style="left:1217px;top:551px;width:124px;height:26px;background:#3f5a98;border-radius:13px;border:1px solid #777;"></div>
<div class="t" style="left:979px;width:600px;text-align:center;top:555.87px;font-size:7.6px;color:#fff;font-weight:700;">Check-In</div>
<div class="a" style="left:1009px;top:604px;width:346px;height:1px;background:#b8b8b8;"></div>
<div class="a" style="left:48px;top:605px;width:1312px;height:297px;background:#fff;"></div>
<div class="a" style="left:699.0px;top:609px;width:1.6000000000000227px;height:2px;background:#444;"></div>
<div class="a" style="left:702.3px;top:609px;width:1.6000000000000227px;height:2px;background:#444;"></div>
<div class="a" style="left:705.6px;top:609px;width:1.6000000000000227px;height:2px;background:#444;"></div>
<svg class="a" style="left:1341px;top:625px;" width="8" height="5" viewBox="0 0 8 5"><path d="M0 0 H8 L4 4.5Z" fill="#6a6a6a"/></svg>
<div class="t" style="left:62.4px;top:634.53px;font-size:10.6px;color:#222;font-weight:700;">History</div>
<div class="t" style="left:113px;top:635.43px;font-size:11.3px;color:#222;">Parts</div>
<div class="t" style="left:152.4px;top:635.43px;font-size:11.3px;color:#222;">Uncert. Budgets</div>
<div class="t" style="left:248px;top:635.43px;font-size:11.3px;color:#222;">Specifications</div>
<div class="t" style="left:333px;top:635.43px;font-size:11.3px;color:#222;">Machines</div>
<div class="t" style="left:396.5px;top:635.43px;font-size:11.3px;color:#222;">Attributes</div>
<div class="t" style="left:461.2px;top:635.43px;font-size:11.3px;color:#222;">Spare Parts</div>
<div class="t" style="left:531.7px;top:635.43px;font-size:11.3px;color:#222;">Default Masters</div>
<div class="t" style="left:626.6px;top:635.43px;font-size:11.3px;color:#222;">Test Points</div>
<div class="t" style="left:695.8px;top:635.43px;font-size:11.3px;color:#222;">Scheduling</div>
<div class="t" style="left:768.6px;top:635.43px;font-size:11.3px;color:#222;">Comp. Parts</div>
<div class="t" style="left:842.7px;top:635.43px;font-size:11.3px;color:#222;">Charges</div>
<div class="t" style="left:898.7px;top:635.43px;font-size:11.3px;color:#222;">Repair Parts</div>
<div class="a" style="left:53px;top:655px;width:1302px;height:240px;background:#fff;border:1px solid #c4c4c4;"></div>
<div class="a" style="left:53px;top:653px;width:55px;height:3px;background:#6753a7;"></div>
<svg class="a" style="left:56px;top:660px;" width="20" height="22" viewBox="0 0 20 22"><path d="M5.8 18.2 L13.3 10.7" stroke="#4a4a58" stroke-width="4.2" stroke-linecap="round"/><path d="M5.8 18.2 L13.3 10.7" stroke="#fff" stroke-width="1.6" stroke-linecap="round"/><path d="M10.6 14.8 L12.2 13.2" stroke="#4a4a58" stroke-width="2"/><circle cx="11" cy="7" r="0.9" fill="#4a4a58"/><circle cx="14.6" cy="7" r="0.9" fill="#4a4a58"/><circle cx="16.8" cy="13" r="0.9" fill="#4a4a58"/></svg>
<svg class="a" style="left:85px;top:665px;" width="14" height="16" viewBox="0 0 14 16"><path d="M1 2.5 H13" stroke="#4a4a58" stroke-width="1.6"/><path d="M4.8 2.5 V0.9 H9.2 V2.5" fill="none" stroke="#4a4a58" stroke-width="1.3"/><path d="M2.2 3.5 L2.8 14.2 H11.2 L11.8 3.5" fill="none" stroke="#4a4a58" stroke-width="1.7"/><path d="M5.2 6 V11.5 M8.8 6 V11.5 M5.2 8.8 H8.8" stroke="#4a4a58" stroke-width="1.3"/></svg>
<svg class="a" style="left:110px;top:665px;" width="14" height="16" viewBox="0 0 14 16"><path d="M3.5 6.3 V4.2 A3.3 3.3 0 0 1 10 3.2" fill="none" stroke="#4a4a58" stroke-width="1.6"/><rect x="0.9" y="6.3" width="12.2" height="9" fill="none" stroke="#4a4a58" stroke-width="1.7"/><rect x="6.2" y="9.3" width="1.7" height="3.2" fill="#4a4a58"/></svg>
<svg class="a" style="left:135px;top:667px;" width="13" height="13" viewBox="0 0 13 13"><path d="M1 1 H12 L8 6.3 V11.3 L5 11.3 V6.3Z" fill="none" stroke="#4a4a58" stroke-width="1.6" stroke-linejoin="round"/></svg>
<svg class="a" style="left:158px;top:666px;" width="18" height="16" viewBox="0 0 18 16"><rect x="1.2" y="1" width="14.2" height="12.5" fill="none" stroke="#4a4a58" stroke-width="1.2"/><rect x="1.2" y="0.5" width="14.2" height="2" fill="#4a4a58"/><rect x="3.0" y="4.3" width="1.7" height="1.6" fill="#9a9aa6"/><rect x="6.0" y="4.3" width="1.7" height="1.6" fill="#9a9aa6"/><rect x="9.0" y="4.3" width="1.7" height="1.6" fill="#9a9aa6"/><rect x="12.0" y="4.3" width="1.7" height="1.6" fill="#9a9aa6"/><rect x="3.0" y="7.2" width="1.7" height="1.6" fill="#9a9aa6"/><rect x="6.0" y="7.2" width="1.7" height="1.6" fill="#b0304a"/><rect x="9.0" y="7.2" width="1.7" height="1.6" fill="#9a9aa6"/><rect x="12.0" y="7.2" width="1.7" height="1.6" fill="#9a9aa6"/><rect x="3.0" y="10.1" width="1.7" height="1.6" fill="#9a9aa6"/><rect x="6.0" y="10.1" width="1.7" height="1.6" fill="#9a9aa6"/><rect x="9.0" y="10.1" width="1.7" height="1.6" fill="#9a9aa6"/><rect x="12.0" y="10.1" width="1.7" height="1.6" fill="#9a9aa6"/><circle cx="13.4" cy="11.8" r="3.6" fill="#fff" stroke="#c8283e" stroke-width="1.4"/><path d="M13.2 9.8 V12.1 H15.2" stroke="#333" stroke-width="1" fill="none"/></svg>
<div class="a" style="left:182px;top:664px;width:1px;height:16px;background:#a0a0a0;"></div>
<svg class="a" style="left:189px;top:665px;" width="18" height="16" viewBox="0 0 18 16"><path d="M6 3.2 V1 H16.3 V14.5 H6 V11.5" fill="none" stroke="#4a4a58" stroke-width="1.3"/><path d="M10 8 H3 M5.8 4.6 L2.2 8 L5.8 11.4" fill="none" stroke="#3f86c8" stroke-width="2.2"/></svg>
<svg class="a" style="left:216px;top:665px;" width="16" height="16" viewBox="0 0 16 16"><path d="M4.2 3.2 V1 H15 V14.5 H4.2 V11.5" fill="none" stroke="#4a4a58" stroke-width="1.3"/><path d="M1 8 H8.5 M6 4.6 L9.5 8 L6 11.4" fill="none" stroke="#3f86c8" stroke-width="2.2"/></svg>
<div class="a" style="left:238px;top:664px;width:1px;height:16px;background:#a0a0a0;"></div>
<svg class="a" style="left:247px;top:665px;" width="15" height="15" viewBox="0 0 15 15"><rect x="0.6" y="0.6" width="13.2" height="13.8" fill="none" stroke="#4a4a58" stroke-width="1.2"/><rect x="3" y="3.0" width="1.1" height="1.1" fill="#4a4a58"/><path d="M5.2 3.5 H11.5" stroke="#8a8a96" stroke-width="0.9"/><rect x="3" y="5.2" width="1.1" height="1.1" fill="#4a4a58"/><path d="M5.2 5.8 H11.5" stroke="#8a8a96" stroke-width="0.9"/><rect x="3" y="7.4" width="1.1" height="1.1" fill="#4a4a58"/><path d="M5.2 8.0 H11.5" stroke="#8a8a96" stroke-width="0.9"/><rect x="3" y="9.6" width="1.1" height="1.1" fill="#4a4a58"/><path d="M5.2 10.2 H11.5" stroke="#8a8a96" stroke-width="0.9"/><rect x="3" y="11.8" width="1.1" height="1.1" fill="#4a4a58"/><path d="M5.2 12.4 H11.5" stroke="#8a8a96" stroke-width="0.9"/></svg>
<div class="a" style="left:269px;top:664px;width:1px;height:16px;background:#a0a0a0;"></div>
<svg class="a" style="left:277px;top:662px;" width="20" height="20" viewBox="0 0 20 20"><rect x="1.3" y="4.5" width="13.7" height="13" rx="3" fill="none" stroke="#4a4a58" stroke-width="1.4"/><path d="M1.3 8 H15 M5.5 4.5 V8 M10.5 4.5 V8" stroke="#4a4a58" stroke-width="1.3"/><circle cx="12.4" cy="15.4" r="3.2" fill="#fff" stroke="#4a4a58" stroke-width="1.2"/><path d="M12 1.3 H19 L15.5 4.8Z" fill="#111"/></svg>
<div class="t" style="right:10.5px;top:669.08px;font-size:12.9px;color:#333;">History</div>
<div class="a" style="left:55px;top:690px;width:968.5px;height:24px;background:#f0f0f0;border-top:1px solid #c8c8c8;border-bottom:1px solid #c8c8c8;"></div>
<div class="a" style="left:55px;top:714px;width:968.5px;height:18px;background:#f5f6fa;"></div>
<div class="a" style="left:55px;top:732px;width:968.5px;height:18px;background:#ffffff;"></div>
<div class="a" style="left:66.5px;top:750px;width:957.0px;height:18px;background:#d2d2d2;"></div>
<div class="a" style="left:55px;top:690px;width:11.5px;height:78px;background:#f0f0f0;"></div>
<div class="a" style="left:55px;top:690px;width:1px;height:78px;background:#cfcfcf;"></div>
<div class="a" style="left:66.5px;top:690px;width:1.0px;height:78px;background:#cfcfcf;"></div>
<div class="a" style="left:166.3px;top:690px;width:1.0px;height:78px;background:#cfcfcf;"></div>
<div class="a" style="left:229.1px;top:690px;width:1.0px;height:78px;background:#cfcfcf;"></div>
<div class="a" style="left:308.3px;top:690px;width:1.0px;height:78px;background:#cfcfcf;"></div>
<div class="a" style="left:400.3px;top:690px;width:1.0px;height:78px;background:#cfcfcf;"></div>
<div class="a" style="left:475.4px;top:690px;width:1.0px;height:78px;background:#cfcfcf;"></div>
<div class="a" style="left:553.4px;top:690px;width:1.0px;height:78px;background:#cfcfcf;"></div>
<div class="a" style="left:641.4px;top:690px;width:1.0px;height:78px;background:#cfcfcf;"></div>
<div class="a" style="left:734.4px;top:690px;width:1.0px;height:78px;background:#cfcfcf;"></div>
<div class="a" style="left:819.3px;top:690px;width:1.0px;height:78px;background:#cfcfcf;"></div>
<div class="a" style="left:904.7px;top:690px;width:1.0px;height:78px;background:#cfcfcf;"></div>
<div class="a" style="left:1004.7px;top:690px;width:1.0px;height:78px;background:#cfcfcf;"></div>
<div class="a" style="left:66.5px;top:714px;width:1.0px;height:54px;background:#e6e6e6;"></div>
<div class="a" style="left:166.3px;top:714px;width:1.0px;height:54px;background:#e6e6e6;"></div>
<div class="a" style="left:229.1px;top:714px;width:1.0px;height:54px;background:#e6e6e6;"></div>
<div class="a" style="left:308.3px;top:714px;width:1.0px;height:54px;background:#e6e6e6;"></div>
<div class="a" style="left:400.3px;top:714px;width:1.0px;height:54px;background:#e6e6e6;"></div>
<div class="a" style="left:475.4px;top:714px;width:1.0px;height:54px;background:#e6e6e6;"></div>
<div class="a" style="left:553.4px;top:714px;width:1.0px;height:54px;background:#e6e6e6;"></div>
<div class="a" style="left:641.4px;top:714px;width:1.0px;height:54px;background:#e6e6e6;"></div>
<div class="a" style="left:734.4px;top:714px;width:1.0px;height:54px;background:#e6e6e6;"></div>
<div class="a" style="left:819.3px;top:714px;width:1.0px;height:54px;background:#e6e6e6;"></div>
<div class="a" style="left:904.7px;top:714px;width:1.0px;height:54px;background:#e6e6e6;"></div>
<div class="a" style="left:1004.7px;top:714px;width:1.0px;height:54px;background:#e6e6e6;"></div>
<div class="a" style="left:55px;top:732px;width:11.5px;height:1px;background:#cfcfcf;"></div>
<div class="a" style="left:55px;top:750px;width:11.5px;height:1px;background:#cfcfcf;"></div>
<div class="a" style="left:55px;top:767px;width:11.5px;height:1px;background:#cfcfcf;"></div>
<div class="a" style="left:66.5px;top:750px;width:957.0px;height:2px;background:#3a3a3a;"></div>
<div class="a" style="left:66.5px;top:766.5px;width:957.0px;height:1.5px;background:#3a3a3a;"></div>
<div class="a" style="left:166.3px;top:750px;width:1.0px;height:18px;background:#f4f4f4;"></div>
<div class="a" style="left:229.1px;top:750px;width:1.0px;height:18px;background:#f4f4f4;"></div>
<div class="a" style="left:308.3px;top:750px;width:1.0px;height:18px;background:#f4f4f4;"></div>
<div class="a" style="left:400.3px;top:750px;width:1.0px;height:18px;background:#f4f4f4;"></div>
<div class="a" style="left:475.4px;top:750px;width:1.0px;height:18px;background:#f4f4f4;"></div>
<div class="a" style="left:553.4px;top:750px;width:1.0px;height:18px;background:#f4f4f4;"></div>
<div class="a" style="left:641.4px;top:750px;width:1.0px;height:18px;background:#f4f4f4;"></div>
<div class="a" style="left:734.4px;top:750px;width:1.0px;height:18px;background:#f4f4f4;"></div>
<div class="a" style="left:819.3px;top:750px;width:1.0px;height:18px;background:#f4f4f4;"></div>
<div class="a" style="left:904.7px;top:750px;width:1.0px;height:18px;background:#f4f4f4;"></div>
<div class="a" style="left:1004.7px;top:750px;width:1.0px;height:18px;background:#f4f4f4;"></div>
<div class="a" style="left:66.5px;top:750px;width:1.5px;height:18px;background:#3a3a3a;"></div>
<svg class="a" style="left:56px;top:696px;" width="10" height="10" viewBox="0 0 10 10"><circle cx="5" cy="5" r="2.6" fill="#f0952a"/><path d="M5 0 V10 M0 5 H10 M1.5 1.5 L8.5 8.5 M8.5 1.5 L1.5 8.5" stroke="#f0952a" stroke-width="1"/></svg>
<svg class="a" style="left:58px;top:756px;" width="6" height="8" viewBox="0 0 6 8"><path d="M0.5 0.5 L5 4 L0.5 7.5Z" fill="#555"/></svg>
<div class="a" style="left:73.7px;top:690px;width:86.3px;height:24px;overflow:hidden"><div class="t" style="left:0px;top:7.17px;font-size:10.9px;color:#222;">Event Type</div>
</div>
<div class="a" style="left:173px;top:690px;width:50px;height:24px;overflow:hidden"><div class="t" style="left:0px;top:7.17px;font-size:10.9px;color:#222;">Check</div>
</div>
<div class="a" style="left:236.5px;top:690px;width:65.5px;height:24px;overflow:hidden"><div class="t" style="left:0px;top:7.17px;font-size:10.9px;color:#222;">Check-Ou</div>
</div>
<div class="a" style="left:315.5px;top:690px;width:78.5px;height:24px;overflow:hidden"><div class="t" style="left:0px;top:7.17px;font-size:10.9px;color:#222;">Entered By</div>
</div>
<div class="a" style="left:407.4px;top:690px;width:61.60000000000002px;height:24px;overflow:hidden"><div class="t" style="left:0px;top:7.17px;font-size:10.9px;color:#222;">Result</div>
</div>
<div class="a" style="left:482.2px;top:690px;width:64.80000000000001px;height:24px;overflow:hidden"><div class="t" style="left:0px;top:7.17px;font-size:10.9px;color:#222;">Status</div>
</div>
<div class="a" style="left:560.5px;top:690px;width:74.5px;height:24px;overflow:hidden"><div class="t" style="left:0px;top:7.17px;font-size:10.9px;color:#222;">Department</div>
</div>
<div class="a" style="left:648.5px;top:690px;width:79.5px;height:24px;overflow:hidden"><div class="t" style="left:0px;top:7.17px;font-size:10.9px;color:#222;">Expected Return</div>
</div>
<div class="a" style="left:741.6px;top:690px;width:71.39999999999998px;height:24px;overflow:hidden"><div class="t" style="left:0px;top:7.17px;font-size:10.9px;color:#222;">User Defined 1</div>
</div>
<div class="a" style="left:826.4px;top:690px;width:71.60000000000002px;height:24px;overflow:hidden"><div class="t" style="left:0px;top:7.17px;font-size:10.9px;color:#222;">User Defined 2</div>
</div>
<div class="a" style="left:911.8px;top:690px;width:86.20000000000005px;height:24px;overflow:hidden"><div class="t" style="left:0px;top:7.17px;font-size:10.9px;color:#222;">Last Modified Da</div>
</div>
<div class="a" style="left:1011.3px;top:690px;width:11.700000000000045px;height:24px;overflow:hidden"><div class="t" style="left:0px;top:7.17px;font-size:10.9px;color:#222;">Last Modified By</div>
</div>
<svg class="a" style="left:210px;top:697px;" width="12" height="9" viewBox="0 0 12 9"><path d="M0.5 1 H5 M0.5 4 H8 M0.5 7 H11" stroke="#555" stroke-width="1.1"/></svg>
<svg class="a" style="left:289px;top:697px;" width="12" height="9" viewBox="0 0 12 9"><path d="M0.5 1 H5 M0.5 4 H8 M0.5 7 H11" stroke="#555" stroke-width="1.1"/></svg>
<div class="a" style="left:69.6px;top:714px;width:96.4px;height:18px;overflow:hidden"><div class="t" style="left:0px;top:5.29px;font-size:11px;color:#222;">Cal. In</div>
</div>
<div class="a" style="left:170px;top:714px;width:59px;height:18px;overflow:hidden"><div class="t" style="left:0px;top:5.29px;font-size:11px;color:#222;">12/29/2022</div>
</div>
<div class="a" style="left:232px;top:714px;width:76px;height:18px;overflow:hidden"><div class="t" style="left:0px;top:5.29px;font-size:11px;color:#222;">10:04:45 AM</div>
</div>
<div class="a" style="left:311.3px;top:714px;width:88.69999999999999px;height:18px;overflow:hidden"><div class="t" style="left:0px;top:5.29px;font-size:11px;color:#222;">INDYSOFT</div>
</div>
<div class="a" style="left:478.6px;top:714px;width:74.39999999999998px;height:18px;overflow:hidden"><div class="t" style="left:0px;top:5.29px;font-size:11px;color:#222;">Complete</div>
</div>
<div class="a" style="left:907.5px;top:714px;width:96.5px;height:18px;overflow:hidden"><div class="t" style="left:0px;top:5.29px;font-size:11px;color:#222;">12/29/2022 10:05 AM</div>
</div>
<div class="a" style="left:1007.5px;top:714px;width:15.5px;height:18px;overflow:hidden"><div class="t" style="left:0px;top:5.29px;font-size:11px;color:#222;">JOHN</div>
</div>
<div class="a" style="left:69.6px;top:732px;width:96.4px;height:18px;overflow:hidden"><div class="t" style="left:0px;top:5.19px;font-size:11px;color:#222;">Calibration</div>
</div>
<div class="a" style="left:170px;top:732px;width:59px;height:18px;overflow:hidden"><div class="t" style="left:0px;top:5.19px;font-size:11px;color:#222;">12/29/2022</div>
</div>
<div class="a" style="left:232px;top:732px;width:76px;height:18px;overflow:hidden"><div class="t" style="left:0px;top:5.19px;font-size:11px;color:#222;">10:05:08 AM</div>
</div>
<div class="a" style="left:311.3px;top:732px;width:88.69999999999999px;height:18px;overflow:hidden"><div class="t" style="left:0px;top:5.19px;font-size:11px;color:#222;">INDYSOFT</div>
</div>
<div class="a" style="left:403.6px;top:732px;width:71.39999999999998px;height:18px;overflow:hidden"><div class="t" style="left:0px;top:5.19px;font-size:11px;color:#222;">Passed</div>
</div>
<div class="a" style="left:478.6px;top:732px;width:74.39999999999998px;height:18px;overflow:hidden"><div class="t" style="left:0px;top:5.19px;font-size:11px;color:#222;">Complete</div>
</div>
<div class="a" style="left:907.5px;top:732px;width:96.5px;height:18px;overflow:hidden"><div class="t" style="left:0px;top:5.19px;font-size:11px;color:#222;">12/29/2022 10:05 AM</div>
</div>
<div class="a" style="left:1007.5px;top:732px;width:15.5px;height:18px;overflow:hidden"><div class="t" style="left:0px;top:5.19px;font-size:11px;color:#222;">JOHN</div>
</div>
<div class="a" style="left:69.6px;top:750px;width:96.4px;height:18px;overflow:hidden"><div class="t" style="left:0px;top:5.09px;font-size:11px;color:#222;">Check-Out</div>
</div>
<div class="a" style="left:170px;top:750px;width:59px;height:18px;overflow:hidden"><div class="t" style="left:0px;top:5.09px;font-size:11px;color:#222;">12/29/2022</div>
</div>
<div class="a" style="left:232px;top:750px;width:76px;height:18px;overflow:hidden"><div class="t" style="left:0px;top:5.09px;font-size:11px;color:#222;">10:06:24 AM</div>
</div>
<div class="a" style="left:311.3px;top:750px;width:88.69999999999999px;height:18px;overflow:hidden"><div class="t" style="left:0px;top:5.09px;font-size:11px;color:#222;">INDYSOFT</div>
</div>
<div class="a" style="left:478.6px;top:750px;width:74.39999999999998px;height:18px;overflow:hidden"><div class="t" style="left:0px;top:5.09px;font-size:11px;color:#222;">Complete</div>
</div>
<div class="a" style="left:907.5px;top:750px;width:96.5px;height:18px;overflow:hidden"><div class="t" style="left:0px;top:5.09px;font-size:11px;color:#222;">12/29/2022 10:06 AM</div>
</div>
<div class="a" style="left:1007.5px;top:750px;width:15.5px;height:18px;overflow:hidden"><div class="t" style="left:0px;top:5.09px;font-size:11px;color:#222;">JOHN</div>
</div>
<div class="a" style="left:1028px;top:787.0px;width:2px;height:1.7999999999999545px;background:#444;"></div>
<div class="a" style="left:1028px;top:790.2px;width:2px;height:1.7999999999999545px;background:#444;"></div>
<div class="a" style="left:1028px;top:793.4px;width:2px;height:1.7999999999999545px;background:#444;"></div>
<div class="a" style="left:1034px;top:690px;width:319px;height:30px;background:#fff;border:1px solid #c8c8c8;"></div>
<svg class="a" style="left:1038px;top:692px;" width="20" height="22" viewBox="0 0 20 22"><path d="M5.8 18.2 L12.8 11.2" stroke="#8e8e8e" stroke-width="3.8" stroke-linecap="round"/><path d="M5.8 18.2 L12.8 11.2" stroke="#fff" stroke-width="1.4" stroke-linecap="round"/><circle cx="10.7" cy="7" r="0.8" fill="#8e8e8e"/><circle cx="15" cy="7" r="0.8" fill="#8e8e8e"/><circle cx="17.3" cy="13.4" r="0.8" fill="#8e8e8e"/></svg>
<svg class="a" style="left:1066px;top:698px;" width="15" height="14" viewBox="0 0 15 14"><path d="M3.5 4 V1 H11.5 V4" fill="none" stroke="#8e8e8e" stroke-width="1.3"/><rect x="0.8" y="4" width="13.4" height="6" rx="1.5" fill="none" stroke="#8e8e8e" stroke-width="1.3"/><rect x="3.5" y="8" width="8" height="5.2" fill="#fff" stroke="#8e8e8e" stroke-width="1.3"/><path d="M3 6.5 H5" stroke="#8e8e8e" stroke-width="1"/></svg>
<svg class="a" style="left:1089px;top:699px;" width="17" height="12" viewBox="0 0 17 12"><rect x="0.6" y="0.6" width="15.6" height="10.8" fill="none" stroke="#8e8e8e" stroke-width="1.1"/><path d="M0.6 0.6 L8.4 7 L16.2 0.6 M0.6 11.4 L6 5.6 M16.2 11.4 L10.8 5.6" fill="none" stroke="#8e8e8e" stroke-width="0.9"/></svg>
<svg class="a" style="left:1114px;top:699px;" width="17" height="12" viewBox="0 0 17 12"><path d="M0.5 1 H12 V7.5 H5.5 L3 10 V7.5 H0.5Z" fill="#d9d9d9"/><path d="M8 10.5 L14.5 3.5 L16 5 L9.5 11.5Z" fill="#d9d9d9"/></svg>
<div class="t" style="right:13px;top:699.73px;font-size:11.3px;color:#333;">History Documents</div>
<div class="a" style="left:1189px;top:799px;width:1.599999999999909px;height:2px;background:#444;"></div>
<div class="a" style="left:1192px;top:799px;width:1.599999999999909px;height:2px;background:#444;"></div>
<div class="a" style="left:1195px;top:799px;width:1.599999999999909px;height:2px;background:#444;"></div>
<div class="a" style="left:1035px;top:806px;width:317px;height:86px;background:#efefef;border:1px solid #a8a8a8;"></div>
</body></html>
